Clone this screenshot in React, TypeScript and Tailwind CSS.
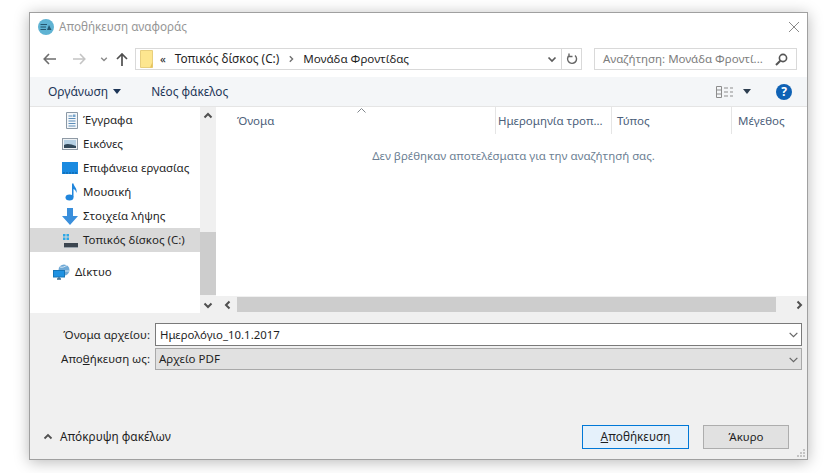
import React from "react";

const font = { fontFamily: '"Noto Sans", "Open Sans", sans-serif' };

function FolderIcon() {
  return (
    <svg width="13" height="18" viewBox="0 0 13 18">
      <path d="M0.5 0.5H12.5V17.5H0.5Z" fill="#fde68f" stroke="#e8cf7d" />
      <path d="M12.5 12V17.5H10Z" fill="#e6c35c" />
    </svg>
  );
}
function DocIcon() {
  return (
    <svg width="12" height="17" viewBox="0 0 12 17">
      <path d="M0.5 0.5H11.5V16.5H0.5Z" fill="#f4f7fa" stroke="#8b99a6" />
      <path d="M2.5 4H6.5M2.5 6.5H9.5M2.5 9H9.5M2.5 11.5H9.5M2.5 14H9.5" stroke="#5c8db8" />
      <path d="M7 2.5H9.5V5H7Z" fill="#76a5cc" />
    </svg>
  );
}
function PicIcon() {
  return (
    <svg width="16" height="12" viewBox="0 0 16 12">
      <rect x="0.5" y="0.5" width="15" height="11" fill="#eef2f5" stroke="#8f9aa5" />
      <rect x="2" y="2" width="12" height="8" fill="#b5d0e4" />
      <path d="M2 7C5 5 9 6 14 8V10H2Z" fill="#31485a" />
    </svg>
  );
}
function DesktopIcon() {
  return (
    <svg width="16" height="12" viewBox="0 0 16 12">
      <rect width="16" height="12" fill="#1a8ae0" />
      <path d="M1 11H15" stroke="#0b5c9c" strokeDasharray="2 1" />
    </svg>
  );
}
function MusicIcon() {
  return (
    <svg width="13" height="18" viewBox="0 0 13 18">
      <ellipse cx="4.5" cy="14.5" rx="4" ry="3" fill="#2186dc" />
      <path d="M7 14V0.5H8.5C9 4 12.5 5 11.5 10C10.8 7.5 9.8 6.5 8.5 6V14Z" fill="#2186dc" />
    </svg>
  );
}
function DownIcon() {
  return (
    <svg width="16" height="17" viewBox="0 0 16 17">
      <path d="M5 0H11V8H16L8 17L0 8H5Z" fill="#3a8fdc" />
    </svg>
  );
}
function DiskIcon() {
  return (
    <svg width="16" height="15" viewBox="0 0 16 15">
      <path d="M1 1H3.5V3.5H1ZM4.5 1H7V3.5H4.5ZM1 4.5H3.5V7H1ZM4.5 4.5H7V7H4.5Z" fill="#2fa8e6" />
      <rect x="2" y="10" width="14" height="4" fill="#3c4650" />
      <rect x="2" y="14" width="14" height="1" fill="#9aa4ad" />
    </svg>
  );
}
function NetIcon() {
  return (
    <svg width="18" height="16" viewBox="0 0 18 16">
      <circle cx="11" cy="6" r="5.5" fill="#6fa9d6" />
      <path d="M7 3C10 4 12 2 14 1.5M6 7H16" stroke="#d6e8f5" fill="none" />
      <rect x="0.5" y="6.5" width="11" height="6.5" fill="#1f92e2" stroke="#1676b8" />
      <path d="M4 15H8M6 13V15" stroke="#3a6b8f" strokeWidth="1.3" />
    </svg>
  );
}
function Chevron({ dir, color = "#5c5c5c", w = 1.7, size = 9 }: { dir: "up" | "down" | "left" | "right"; color?: string; w?: number; size?: number }) {
  const d = {
    up: "M1.5 6.5L5 3L8.5 6.5",
    down: "M1.5 3.5L5 7L8.5 3.5",
    left: "M6.5 1.5L3 5L6.5 8.5",
    right: "M3.5 1.5L7 5L3.5 8.5",
  }[dir];
  return (
    <svg width={size} height={size} viewBox="0 0 10 10">
      <path d={d} fill="none" stroke={color} strokeWidth={w} />
    </svg>
  );
}

function TreeRow({ icon, label, selected = false }: { icon: React.ReactNode; label: string; selected?: boolean }) {
  return (
    <div className={`flex h-6 items-center ${selected ? "bg-[#d9d9d9]" : ""}`}>
      <div className="flex w-[53px] shrink-0 items-center justify-end pr-[5px]">{icon}</div>
      <span className="whitespace-nowrap text-[11.5px] text-[#1f1f1f]">{label}</span>
    </div>
  );
}

function HeaderCell({ label, className }: { label: string; className: string }) {
  return (
    <div className={`flex h-[27px] items-center overflow-hidden whitespace-nowrap border-r border-[#e5e5e5] text-[11.5px] text-[#4c607a] ${className}`}>
      {label}
    </div>
  );
}

export default function App() {
  return (
    <div className="h-[473px] w-[840px] overflow-hidden bg-white pl-[29px] pt-[12px]" style={font}>
      <div className="flex h-[448px] w-[779px] flex-col border border-[#a0a0a0] bg-white shadow-[0_2px_14px_rgba(0,0,0,0.28)]">
        {/* Title bar */}
        <div className="flex h-[28px] shrink-0 items-center pl-2 pr-[7px]">
          <svg width="16" height="16" viewBox="0 0 16 16">
            <circle cx="8" cy="8" r="8" fill="#5fb3d3" />
            <path d="M2.5 5.5H9M2.5 8H8M2.5 10.5H8" stroke="#24566f" strokeWidth="1.1" />
            <path d="M9 11L11 6L13.5 11Z" fill="#24566f" />
          </svg>
          <span className="ml-[5px] text-[11.7px] text-[#969696]">Αποθήκευση αναφοράς</span>
          <svg className="ml-auto" width="12" height="12" viewBox="0 0 12 12">
            <path d="M1 1L11 11M11 1L1 11" stroke="#8a8a8a" />
          </svg>
        </div>

        {/* Navigation bar */}
        <div className="flex h-[36px] shrink-0 items-center">
          <svg className="ml-[13px]" width="13" height="12" viewBox="0 0 13 12">
            <path d="M6 1L1.2 6L6 11M1.2 6H13" fill="none" stroke="#6e6e6e" strokeWidth="1.6" />
          </svg>
          <svg className="ml-[17px]" width="13" height="12" viewBox="0 0 13 12">
            <path d="M7 1L11.8 6L7 11M11.8 6H0" fill="none" stroke="#c4c4c4" strokeWidth="1.6" />
          </svg>
          <div className="ml-[14px]"><Chevron dir="down" color="#8a8a8a" size={8} /></div>
          <svg className="ml-[8px]" width="12" height="13" viewBox="0 0 12 13">
            <path d="M1 6L6 1L11 6M6 1V13" fill="none" stroke="#4f4f4f" strokeWidth="1.7" />
          </svg>
          <div className="ml-[7px] flex h-[22px] w-[447px] items-center border border-[#d9d9d9] pl-1">
            <FolderIcon />
            <span className="ml-[7px] text-[11.5px] text-[#1f1f1f]">«</span>
            <span className="ml-[9px] whitespace-nowrap text-[11.8px] text-[#1f1f1f]">Τοπικός δίσκος (C:)</span>
            <div className="ml-[8px]"><Chevron dir="right" color="#707070" size={8} /></div>
            <span className="ml-[8px] whitespace-nowrap text-[11.6px] text-[#1f1f1f]">Μονάδα Φροντίδας</span>
            <div className="ml-auto flex h-full items-center">
              <Chevron dir="down" color="#5c5c5c" size={10} />
              <div className="ml-[4px] flex h-full w-[20px] items-center justify-center border-l border-[#d9d9d9]">
                <svg width="12" height="12" viewBox="0 0 12 12">
                  <path d="M3.5 2.2A4.5 4.5 0 1 0 9 2.5M3 0.5V3.5H6.5" fill="none" stroke="#666" strokeWidth="1.4" />
                </svg>
              </div>
            </div>
          </div>
          <div className="ml-[12px] flex h-[22px] w-[203px] items-center border border-[#d9d9d9] pl-2 pr-[8px]">
            <span className="whitespace-nowrap text-[11.5px] text-[#7d7d7d]">Αναζήτηση: Μονάδα Φροντί...</span>
            <svg className="ml-auto" width="13" height="13" viewBox="0 0 13 13">
              <circle cx="8" cy="5" r="3.6" fill="none" stroke="#555" strokeWidth="1.6" />
              <path d="M5.3 7.7L1 12" stroke="#555" strokeWidth="2" />
            </svg>
          </div>
        </div>

        {/* Toolbar */}
        <div className="flex h-[30px] shrink-0 items-center border-b border-[#e5e5e5] bg-[#f4f6f8] pl-[18px]">
          <span className="text-[12px] text-[#1d3557]">Οργάνωση</span>
          <svg className="ml-[5px]" width="8" height="5" viewBox="0 0 8 5"><path d="M0 0H8L4 5Z" fill="#1d3557" /></svg>
          <span className="ml-[30px] text-[11.8px] text-[#1d3557]">Νέος φάκελος</span>
          <svg className="ml-auto" width="17" height="12" viewBox="0 0 17 12">
            <path d="M0.5 0.5H5.5V11.5H0.5ZM0.5 4H5.5M0.5 8H5.5M8 2H12M8 6H12M8 10H12M14 2H17M14 6H17M14 10H17" fill="none" stroke="#8d8d8d" />
          </svg>
          <svg className="ml-[10px]" width="8" height="5" viewBox="0 0 8 5"><path d="M0 0H8L4 5Z" fill="#2d3e50" /></svg>
          <div className="ml-[25px] mr-[15px] flex h-4 w-4 items-center justify-center rounded-full bg-[#0f62b5] text-[12px] font-bold leading-none text-white">?</div>
        </div>

        {/* Main */}
        <div className="flex h-[206px] shrink-0">
          <div className="flex w-[170px] shrink-0 flex-col pt-[1px]">
            <TreeRow icon={<DocIcon />} label="Έγγραφα" />
            <TreeRow icon={<PicIcon />} label="Εικόνες" />
            <TreeRow icon={<DesktopIcon />} label="Επιφάνεια εργασίας" />
            <TreeRow icon={<MusicIcon />} label="Μουσική" />
            <TreeRow icon={<DownIcon />} label="Στοιχεία λήψης" />
            <TreeRow icon={<DiskIcon />} label="Τοπικός δίσκος (C:)" selected />
            <div className="mt-2 flex h-6 items-center pl-[23px]">
              <NetIcon />
              <span className="ml-[4px] text-[11.5px] text-[#1f1f1f]">Δίκτυο</span>
            </div>
          </div>
          <div className="flex w-[16px] shrink-0 flex-col bg-[#f0f0f0]">
            <div className="flex h-[17px] items-center justify-center"><Chevron dir="up" color="#505050" size={10} w={2} /></div>
            <div className="mt-[108px] h-[63px] bg-[#cdcdcd]" />
            <div className="mt-auto flex h-[17px] items-center justify-center"><Chevron dir="down" color="#505050" size={10} w={2} /></div>
          </div>
          <div className="relative flex min-w-0 flex-1 flex-col">
            <div className="flex shrink-0 pl-[1px]">
              <HeaderCell label="Όνομα" className="w-[279px] pl-[20px]" />
              <HeaderCell label="Ημερομηνία τροπ..." className="w-[116px] pl-[2px]" />
              <HeaderCell label="Τύπος" className="w-[120px] pl-[5px]" />
              <div className="flex h-[27px] items-center whitespace-nowrap pl-[6px] text-[11.5px] text-[#4c607a]">Μέγεθος</div>
              <svg className="absolute left-[141px] top-[1px]" width="9" height="5" viewBox="0 0 9 5">
                <path d="M0.5 4.5L4.5 0.5L8.5 4.5" fill="none" stroke="#80868c" />
              </svg>
            </div>
            <div className="flex flex-1 justify-center pl-[4px] pt-[13px]">
              <span className="whitespace-nowrap text-[11.5px] text-[#6d7f94]">Δεν βρέθηκαν αποτελέσματα για την αναζήτησή σας.</span>
            </div>
            <div className="flex h-[17px] shrink-0 items-center bg-[#f0f0f0]">
              <div className="ml-[3px] flex w-[18px] justify-center"><Chevron dir="left" color="#505050" size={10} w={2} /></div>
              <div className="h-[15px] w-[539px] bg-[#cdcdcd]" />
              <div className="ml-auto flex w-[17px] justify-center"><Chevron dir="right" color="#505050" size={10} w={2} /></div>
            </div>
          </div>
        </div>

        {/* Footer */}
        <div className="relative flex flex-1 flex-col bg-[#f0f0f0] pr-[5px] pt-[10px]">
          <div className="flex items-center">
            <span className="w-[125px] shrink-0 whitespace-nowrap pr-[5px] text-right text-[11.5px] text-[#1f1f1f]">Όνομα αρχείου:</span>
            <div className="flex h-[23px] flex-1 items-center justify-between border border-[#7a7a7a] bg-white pl-[4px] pr-[2px]">
              <span className="text-[11.4px] text-[#1f1f1f]">Ημερολόγιο_10.1.2017</span>
              <Chevron dir="down" color="#666" w={1.1} size={11} />
            </div>
          </div>
          <div className="mt-[2px] flex items-center">
            <span className="w-[125px] shrink-0 whitespace-nowrap pr-[5px] text-right text-[11.5px] text-[#1f1f1f]">Απο<u>θ</u>ήκευση ως:</span>
            <div className="flex h-[22px] flex-1 items-center justify-between border border-[#a9a9a9] bg-[#e1e1e1] pl-[3px] pr-[2px]">
              <span className="text-[11.5px] text-[#1f1f1f]">Αρχείο PDF</span>
              <Chevron dir="down" color="#666" w={1.1} size={11} />
            </div>
          </div>
          <div className="mt-auto flex items-center pb-[10px] pl-[13px]">
            <Chevron dir="up" color="#505050" size={10} w={1.8} />
            <span className="ml-[7px] text-[11.8px] text-[#1f1f1f]">Απόκρυψη φακέλων</span>
            <div className="ml-auto mr-[13px] flex gap-[14px]">
              <button className="h-6 w-[107px] border border-[#0078d7] bg-[#e5f1fb] text-[11.8px] text-[#1f1f1f]" style={font}><u>Α</u>ποθήκευση</button>
              <button className="h-6 w-[86px] border border-[#adadad] bg-[#e1e1e1] text-[11.5px] text-[#1f1f1f]" style={font}>Άκυρο</button>
            </div>
          </div>
          <svg className="absolute bottom-[1px] right-[1px]" width="10" height="10" viewBox="0 0 10 10">
            <path d="M7 1h2v2H7zM4 4h2v2H4zM7 4h2v2H7zM1 7h2v2H1zM4 7h2v2H4zM7 7h2v2H7z" fill="#c4c4c4" />
          </svg>
        </div>
      </div>
    </div>
  );
}
